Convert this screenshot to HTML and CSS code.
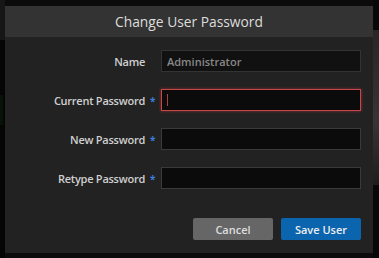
FILE: index.html
```html
<!DOCTYPE html>
<html>
<head>
<meta charset="utf-8">
<link rel="stylesheet" href="styles.css">
</head>
<body>
<div class="backdrop">
  <div class="side-left"><div class="glow-green"></div></div>
  <div class="side-right"><div class="thumb"></div></div>
</div>
<div class="modal">
  <div class="modal-header">Change User Password</div>
  <div class="modal-body">
    <div class="form">
      <label class="lbl">Name</label><span class="req"></span>
      <div class="field"><input class="inp" type="text" placeholder="Administrator" disabled></div>

      <label class="lbl">Current Password</label><span class="req">*</span>
      <div class="field"><input class="inp focus" type="password"><span class="caret"></span></div>

      <label class="lbl">New Password</label><span class="req">*</span>
      <div class="field"><input class="inp" type="password"></div>

      <label class="lbl">Retype Password</label><span class="req">*</span>
      <div class="field"><input class="inp" type="password"></div>
    </div>
    <div class="actions">
      <button class="btn cancel">Cancel</button>
      <button class="btn save">Save User</button>
    </div>
  </div>
</div>
</body>
</html>
```

FILE: styles.css
```css
* { box-sizing: border-box; }
html, body { margin: 0; padding: 0; }
body {
  width: 379px;
  height: 258px;
  overflow: hidden;
  background: #0b0b0b;
  position: relative;
  font-family: "Open Sans", "Noto Sans", sans-serif;
}
.backdrop {
  display: flex;
  justify-content: space-between;
  height: 258px;
}
.side-left {
  width: 5px;
  background: #050505;
}
.side-left::before {
  content: "";
  display: block;
  height: 40px;
  background: #161616;
}
.glow-green {
  margin-top: 55px;
  height: 30px;
  width: 3px;
  background: #061306;
}
.side-right {
  width: 6px;
  background: #080808;
  padding-top: 30px;
}
.thumb {
  height: 155px;
  background: linear-gradient(#2a2626, #3a3434 60%, #1e1c1c);
}

.modal {
  position: absolute;
  left: 5px;
  top: 6px;
  width: 368px;
  height: 247px;
  background: #222;
}
.modal-header {
  height: 31px;
  background: #333;
  color: #ddd;
  font-size: 13.8px;
  line-height: 31px;
  text-align: center;
}
.modal-body {
  padding: 13px 12px 0 0;
}
.form {
  display: grid;
  grid-template-columns: 140px 16px 200px;
  grid-auto-rows: 22px;
  row-gap: 17px;
  align-items: center;
}
.lbl {
  text-align: right;
  color: #d0d0d0;
  font-size: 11px;
  font-weight: 600;
  letter-spacing: -0.25px;
}
.req {
  color: #3b7dd8;
  font-size: 10px;
  font-weight: 700;
  text-align: left;
  padding-left: 5px;
  padding-top: 2px;
}
.field {
  position: relative;
  height: 22px;
}
.inp {
  display: block;
  width: 200px;
  height: 22px;
  margin: 0;
  background: #0b0b0b;
  border: 1px solid #3a3a3a;
  padding: 0 5px;
  color: #888;
  font-family: inherit;
  font-size: 11px;
  font-weight: 600;
  outline: none;
}
.inp::placeholder { color: #888; opacity: 1; }
.inp:disabled { background: #111; border-color: #333; }
.inp.focus {
  border-color: #c84646;
  box-shadow: 0 0 3px rgba(220, 70, 70, 0.55);
}
.caret {
  position: absolute;
  left: 6px;
  top: 5px;
  width: 1px;
  height: 12px;
  background: #b04040;
}
.actions {
  display: flex;
  justify-content: flex-end;
  gap: 8px;
  margin-top: 29px;
}
.btn {
  width: 80px;
  height: 22px;
  border: none;
  border-radius: 2px;
  font-family: inherit;
  font-size: 11px;
  font-weight: 600;
  padding: 0;
}
.cancel { background: #666; color: #ddd; }
.save { background: #0b64ae; color: #eee; }
```
